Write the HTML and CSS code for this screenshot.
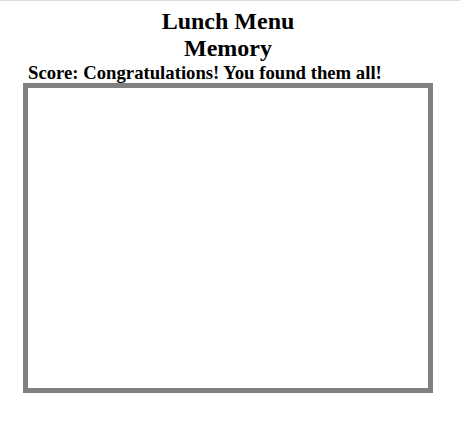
FILE: index.html
```html
<!DOCTYPE html>
<html lang="en">
<head>
    <meta charset="UTF-8">
    <meta name="viewport" content="width=device-width, initial-scale=1.0">
    <title>Lunch Menu Memory</title>
    <link rel="stylesheet" href="styles.css">
</head>
<body>
    <div class="game">
        <h1>Lunch Menu<br>Memory</h1>
        <h3 id="score">Score: Congratulations! You found them all!</h3>
        <div id="board"></div>
    </div>
</body>
</html>
```

FILE: styles.css
```css
html {
    border-top: 1px solid #dcdce0;
}
body {
    font-family: "Liberation Serif", "Times New Roman", serif;
    margin: 0;
    padding: 7px 8px 8px;
}
.game {
    margin-left: 15px;
    width: 410px;
}
h1 {
    font-size: 24px;
    text-align: center;
    margin: 0;
}
#score {
    font-size: 18.72px;
    line-height: 21px;
    margin: 0 0 0 5px;
}
#board {
    width: 400px;
    height: 300px;
    border: 5px solid #808080;
    background: #fff;
}
```
